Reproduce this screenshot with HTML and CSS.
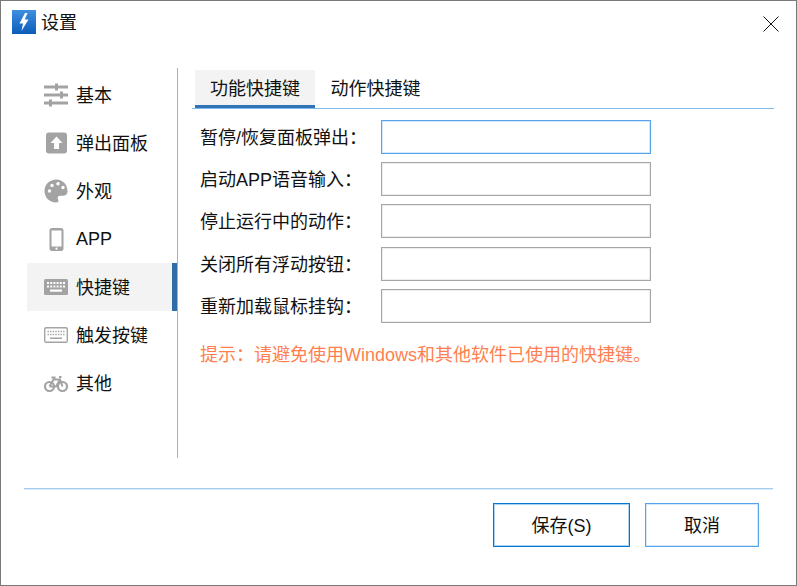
FILE: index.html
```html
<!DOCTYPE html>
<html lang="zh-CN">
<head>
<meta charset="utf-8">
<title>设置</title>
<link rel="stylesheet" href="styles.css">
</head>
<body>
<div class="window">
  <header class="titlebar">
    <svg class="app-icon" width="24" height="24" viewBox="0 0 24 24">
      <defs><linearGradient id="g" x1="0" y1="0" x2="0" y2="1"><stop offset="0" stop-color="#3f8fe0"/><stop offset="1" stop-color="#0a5cb8"/></linearGradient></defs>
      <rect width="24" height="24" fill="url(#g)"/>
      <path d="M13 3 L7.500 13.500 H11 L9.500 21 L16.500 9.500 H12.800 L15.500 3 Z" fill="#fff"/>
    </svg>
    <span class="title">设置</span>
    <svg class="close" width="16" height="16" viewBox="0 0 16 16"><path d="M.5.5 15.500 15.500M15.500.5 .5 15.500" stroke="#111" stroke-width="1" fill="none"/></svg>
  </header>
  <div class="main">
    <nav class="sidebar">
      <div class="nav-item">
        <svg class="nav-icon" width="24" height="24" viewBox="0 0 24 24" fill="#a3a3a3"><rect y="2.500" width="24" height="3"/><rect x="11" y="0.500" width="3" height="7"/><rect y="10.500" width="24" height="3"/><rect x="16" y="8.500" width="3" height="7"/><rect y="18.500" width="24" height="3"/><rect x="5" y="16.500" width="3" height="7"/></svg>
        <span>基本</span>
      </div>
      <div class="nav-item">
        <svg class="nav-icon" width="24" height="24" viewBox="0 0 24 24"><rect x="2" y="1.500" width="21" height="21" rx="3" fill="#a3a3a3"/><path d="M12.500 5.500 18.500 12H15v6H10v-6H6.500Z" fill="#fff"/></svg>
        <span>弹出面板</span>
      </div>
      <div class="nav-item">
        <svg class="nav-icon" width="24" height="24" viewBox="0 0 24 24"><path d="M12.500 0.500C5.500.5.5 5.500.5 12S5.500 23.500 12 23.500c2.500 0 3-1.800 2-3.200-1-1.600 0-3.600 2-3.600h3.500c2.500 0 4-1.800 4-4.700C23.500 5.500 18.500.5 12.500.5Z" fill="#a3a3a3"/><g fill="#fff"><circle cx="5.500" cy="12" r="1.700"/><circle cx="8" cy="6.500" r="1.700"/><circle cx="14" cy="4.800" r="1.700"/><circle cx="19" cy="8.500" r="1.700"/></g></svg>
        <span>外观</span>
      </div>
      <div class="nav-item">
        <svg class="nav-icon" width="24" height="24" viewBox="0 0 24 24"><rect x="5.500" y="1" width="14" height="23" rx="2.500" fill="#a3a3a3"/><rect x="7.500" y="3.500" width="10" height="16" fill="#fff"/><circle cx="12.500" cy="21.700" r="1.100" fill="#fff"/></svg>
        <span class="latin">APP</span>
      </div>
      <div class="nav-item active">
        <svg class="nav-icon" width="24" height="24" viewBox="0 0 24 24"><rect y="4" width="24" height="16" rx="1.500" fill="#a3a3a3"/><path d="M3 8h18M3 11.500h18" stroke="#fff" stroke-width="1.800" stroke-dasharray="2 1.200" fill="none"/><rect x="6" y="14.500" width="12" height="2.200" fill="#fff"/></svg>
        <span>快捷键</span>
      </div>
      <div class="nav-item">
        <svg class="nav-icon" width="24" height="24" viewBox="0 0 24 24"><rect x=".7" y="4.700" width="22.600" height="14.600" rx="1.500" fill="#fff" stroke="#a3a3a3" stroke-width="1.400"/><path d="M3.500 8.500h17M3.500 11.500h17" stroke="#a3a3a3" stroke-width="1.300" stroke-dasharray="1.400 1.200" fill="none"/><rect x="6" y="14.500" width="12" height="1.500" fill="#a3a3a3"/></svg>
        <span>触发按键</span>
      </div>
      <div class="nav-item">
        <svg class="nav-icon" width="24" height="24" viewBox="0 0 24 24" fill="none" stroke="#a3a3a3" stroke-width="2.200"><circle cx="5.500" cy="15.500" r="4.500"/><circle cx="18.500" cy="15.500" r="4.500"/><path d="M5.500 15.500 9.500 8.500H16l2.500 7M5.500 15.500H12L16 8.500M15 6H17.500M7.500 6.500h4" stroke-width="2"/></svg>
        <span>其他</span>
      </div>
    </nav>
    <section class="content">
      <div class="tabs">
        <div class="tab selected">功能快捷键</div>
        <div class="tab">动作快捷键</div>
      </div>
      <div class="form">
        <label class="row"><span class="label">暂停/恢复面板弹出：</span><input class="field focused" type="text"></label>
        <label class="row"><span class="label">启动APP语音输入：</span><input class="field" type="text"></label>
        <label class="row"><span class="label">停止运行中的动作：</span><input class="field" type="text"></label>
        <label class="row"><span class="label">关闭所有浮动按钮：</span><input class="field" type="text"></label>
        <label class="row"><span class="label">重新加载鼠标挂钩：</span><input class="field" type="text"></label>
      </div>
      <p class="tip">提示：请避免使用Windows和其他软件已使用的快捷键。</p>
    </section>
  </div>
  <footer class="footer">
    <button class="btn primary" type="button">保存(S)</button>
    <button class="btn secondary" type="button">取消</button>
  </footer>
</div>
</body>
</html>
```

FILE: styles.css
```css
* { box-sizing: border-box; }
html, body { margin: 0; padding: 0; background: #fff; }
body {
  width: 797px;
  height: 586px;
  overflow: hidden;
  font-family: "Liberation Sans", "Noto Sans CJK SC", sans-serif;
  font-size: 18px;
  color: #111;
}
.window {
  width: 797px;
  height: 586px;
  border: 1px solid #7a7a7a;
  background: #fff;
  display: flex;
  flex-direction: column;
}
.titlebar {
  height: 67px;
  padding: 9px 17px 0 11px;
  display: flex;
  align-items: flex-start;
  flex: none;
}
.app-icon { flex: none; }
.title { margin-left: 5px; line-height: 26px; }
.close { margin-left: auto; margin-top: 6px; flex: none; }
.main {
  display: flex;
  height: 390px;
  flex: none;
}
.sidebar {
  width: 177px;
  padding: 3px 0 0 26px;
  border-right: 1px solid #8fb8dc;
  flex: none;
}
.nav-item {
  height: 48px;
  display: flex;
  align-items: center;
  padding: 0 0 3px 17px;
  gap: 8px;
  width: 150px;
}
.nav-item.active {
  background: #f3f3f3;
  border-right: 5px solid #2f6ca8;
}
.nav-icon { flex: none; margin-top: 3px; }
.latin { margin-top: 3px; }
.content {
  flex: 1;
  padding-left: 14px;
  padding-right: 22px;
}
.tabs {
  display: flex;
  height: 41px;
  padding: 2px 0 0 3px;
  border-bottom: 1px solid #7fb8ea;
}
.tab {
  width: 120px;
  height: 38px;
  padding-top: 7px;
  text-align: center;
  line-height: 24px;
}
.tab + .tab { width: 121px; }
.tab.selected {
  background: #f3f3f3;
  border-bottom: 3px solid #2f75b5;
}
.form {
  display: flex;
  flex-direction: column;
  gap: 8.2px;
  padding: 11px 0 0 8px;
}
.row {
  display: flex;
  align-items: center;
  height: 34px;
}
.label { width: 181px; flex: none; padding-bottom: 2px; }
.field {
  width: 270px;
  height: 34px;
  border: 1px solid #a6a6a6;
  box-shadow: inset 0 0 0 1px #ececec;
  background: #fff;
  outline: none;
  padding: 0;
  margin: 0;
}
.field.focused {
  border-color: #55a3ec;
  box-shadow: inset 0 0 0 1px #d5e8fa;
}
.tip {
  margin: 0;
  padding: 20px 0 0 8px;
  color: #ff7f50;
  line-height: 24px;
}
.footer {
  margin: 30px 23px 0;
  width: 749px;
  border-top: 1px solid #a4cdf0;
  box-shadow: inset 0 1px 0 #dcecfa;
  padding: 14px 14px 0 469px;
  display: flex;
  gap: 15px;
}
.btn {
  height: 44px;
  background: #fff;
  font: inherit;
  color: #111;
  padding: 0 0 2px;
}
.btn.primary {
  width: 137px;
  border: 1px solid #0078d7;
  box-shadow: inset 0 0 0 1px #a9d2f3;
}
.btn.secondary {
  width: 114px;
  border: 1px solid #55a3ec;
  box-shadow: inset 0 0 0 1px #d5e8fa;
}
```
